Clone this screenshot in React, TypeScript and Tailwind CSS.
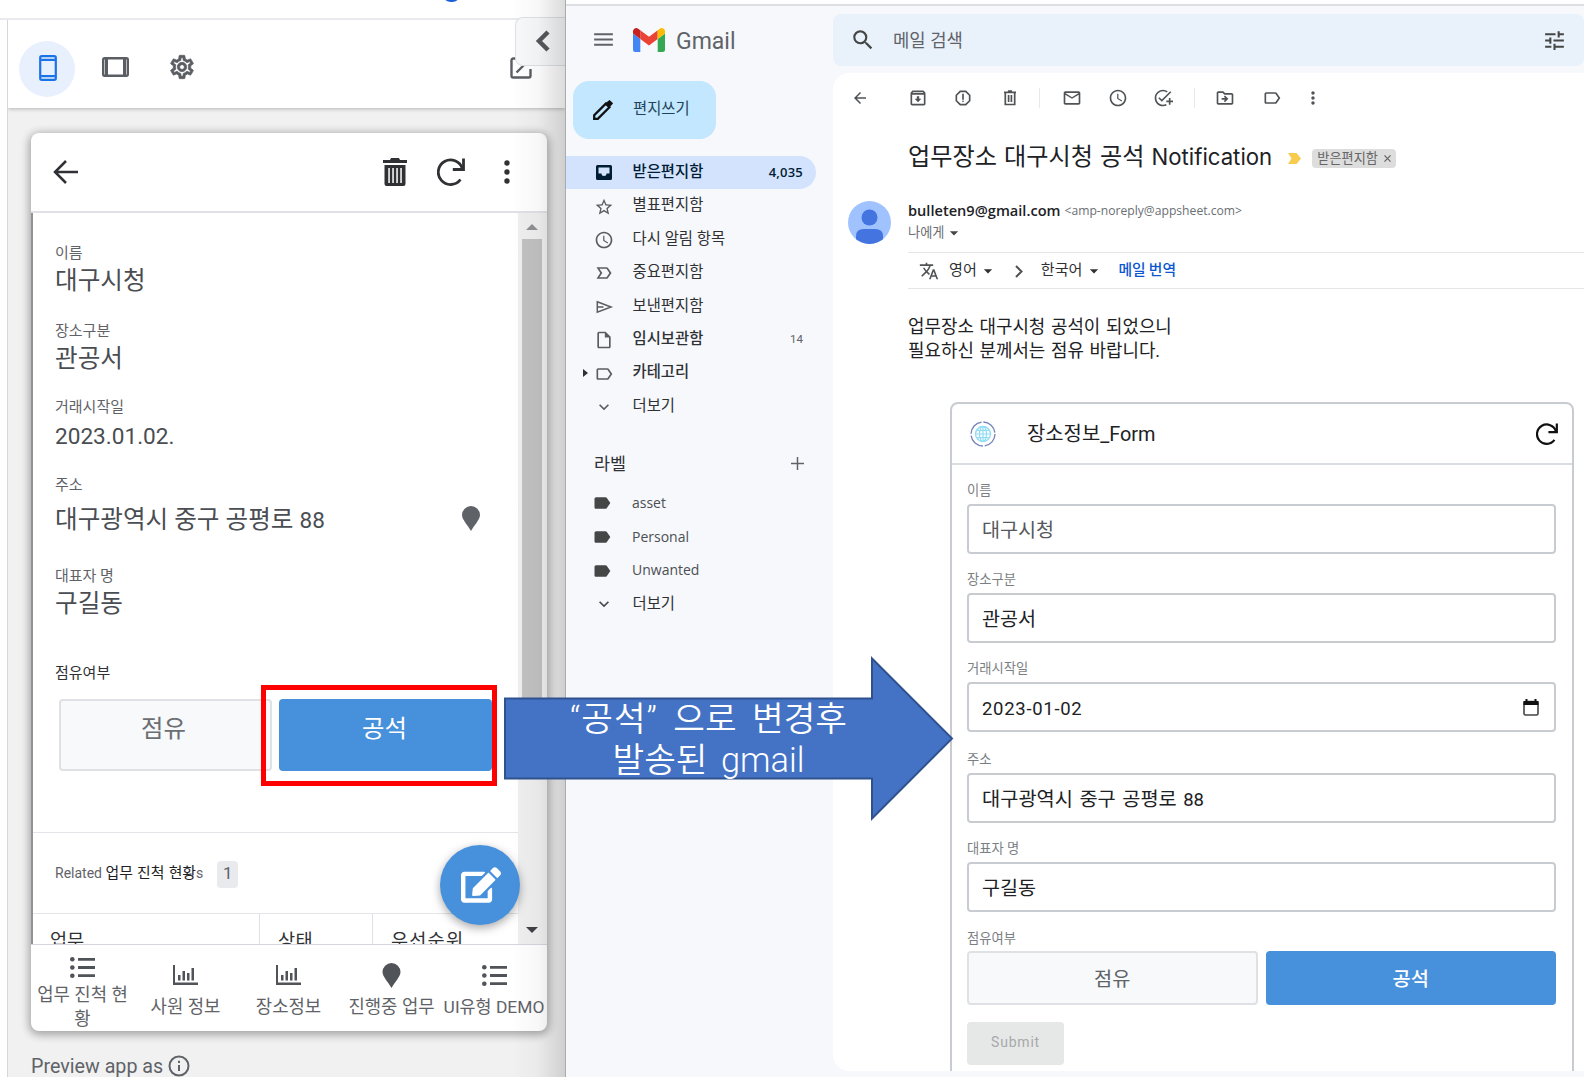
import type { ReactNode } from 'react';
import {
  MdAddTask,
  MdArrowBack,
  MdArrowDropDown,
  MdKeyboardArrowDown,
  MdLabel,
  MdLabelImportantOutline,
  MdLabelOutline,
  MdMailOutline,
  MdMenu,
  MdMoreVert,
  MdOutlineArchive,
  MdOutlineDriveFileMove,
  MdOutlineInsertDriveFile,
  MdOutlineReport,
  MdOutlineSettings,
  MdSchedule,
  MdSearch,
  MdStarOutline,
  MdTranslate,
  MdTune,
} from 'react-icons/md';
import { FaEdit } from 'react-icons/fa';

const font = "font-['Roboto','Noto_Sans_CJK_KR',sans-serif]";

/* ---------- icons ---------- */

function Refresh({ className }: { className: string }) {
  return (
    <svg viewBox="0 0 28 28" fill="none" stroke="currentColor" strokeWidth="2.8" className={className}>
      <path d="M23.5 21.5A12.3 12.3 0 1 1 25.3 10.5" />
      <path d="M26.5 0.5V11.5H15.8" />
    </svg>
  );
}

function Trash({ className }: { className: string }) {
  return (
    <svg viewBox="0 0 24 28" fill="currentColor" className={className}>
      <path d="M0 2h7l1-2h8l1 2h7v3H0z" />
      <path
        fillRule="evenodd"
        d="M1.5 7h21v19a2 2 0 0 1-2 2h-17a2 2 0 0 1-2-2zM5.3 10v15h1.5V10zM9.3 10v15h1.5V10zM13.3 10v15h1.5V10zM17.3 10v15h1.5V10z"
      />
    </svg>
  );
}

function TrashSmall({ className }: { className: string }) {
  return (
    <svg viewBox="0 0 20 20" fill="none" stroke="currentColor" strokeWidth="1.7" className={className}>
      <path d="M4 4.3h12M8 3.2h4M5.3 4.5v12h9.4v-12M8.6 7v7M11.4 7v7" />
    </svg>
  );
}

function Pin({ className }: { className: string }) {
  return (
    <svg viewBox="0 0 18 25" fill="currentColor" className={className}>
      <path d="M9 0a9 9 0 0 1 9 9c0 4.500-6 10.500-9 16C6 19.500 0 13.500 0 9a9 9 0 0 1 9-9z" />
    </svg>
  );
}

function ListIcon() {
  return (
    <svg viewBox="0 0 25 21" fill="currentColor" className="h-[21px] w-[25px]">
      <circle cx="2.300" cy="2.300" r="2.300" />
      <circle cx="2.300" cy="10.500" r="2.300" />
      <circle cx="2.300" cy="18.700" r="2.300" />
      <path d="M8 1h17v2.800H8zM8 9.100h17v2.800H8zM8 17.300h17v2.800H8z" />
    </svg>
  );
}

function ChartIcon() {
  return (
    <svg viewBox="0 0 25 20" fill="currentColor" className="h-5 w-[25px]">
      <path d="M0 0h2v17.500h23V20H0zM5 10h2.500v5.500H5zM9.500 6H12v9.500H9.500zM14 8h2.500v7.500H14zM18.500 3H21v12.500h-2.500z" />
    </svg>
  );
}

function Inbox() {
  return (
    <svg viewBox="0 0 20 20" fill="currentColor" className="h-5 w-5">
      <path fillRule="evenodd" d="M3.500 2h13A1.500 1.500 0 0 1 18 3.500v12a1.500 1.500 0 0 1-1.500 1.500h-13A1.500 1.500 0 0 1 2 15.500v-12A1.500 1.500 0 0 1 3.500 2zM4.500 4.500v6h3a2.500 2.500 0 0 0 5 0h3v-6z" />
    </svg>
  );
}

function Send() {
  return (
    <svg viewBox="0 0 20 20" fill="none" stroke="currentColor" strokeWidth="1.500" className="h-5 w-5">
      <path d="M3.300 4.800 17 10 3.300 15.200zM3.500 10h6" />
    </svg>
  );
}

function GmailLogo() {
  return (
    <svg viewBox="0 0 32 24" className="h-6 w-8">
      <path fill="#4285f4" d="M0 5.500 7.300 11v13H2.200A2.200 2.200 0 0 1 0 21.800z" />
      <path fill="#34a853" d="M32 5.500 24.700 11v13h5.100a2.200 2.200 0 0 0 2.200-2.200z" />
      <path fill="#ea4335" d="M7.300 2.200 16 8.800l8.700-6.600V11L16 17.600 7.300 11z" />
      <path fill="#c5221f" d="M0 3.300C0 .6 3.100-.9 5.200.7l2.100 1.500V11L0 5.500z" />
      <path fill="#fbbc04" d="M32 3.300c0-2.700-3.100-4.200-5.200-2.600l-2.100 1.500V11L32 5.500z" />
    </svg>
  );
}

function Globe() {
  return (
    <svg viewBox="0 0 26 26" fill="none" className="h-[26px] w-[26px]">
      <circle cx="13" cy="13" r="12" stroke="#7382b8" strokeWidth="1.300" strokeDasharray="17 1.850" />
      <circle cx="13" cy="13" r="7.500" stroke="#8fdcf3" strokeWidth="1.300" />
      <ellipse cx="13" cy="13" rx="3.500" ry="7.500" stroke="#8fdcf3" strokeWidth="1.200" />
      <path d="M13 5v16M5.500 13h15M7 9.300h12M7 16.700h12" stroke="#8fdcf3" strokeWidth="1.200" />
    </svg>
  );
}

/* ---------- app preview on the left ---------- */

function Detail({ label, className, children }: { label: string; className: string; children: ReactNode }) {
  return (
    <div className={`flex flex-col ${className}`}>
      <div className="flex h-5 items-center text-[15px] leading-none text-[#5f6368]">{label}</div>
      {children}
    </div>
  );
}

const valueCls = 'flex h-9 items-center whitespace-nowrap text-[24.600px] leading-none text-[#4a4d52]';

function NavItem({ icon, className, children }: { icon: ReactNode; className: string; children: ReactNode }) {
  return (
    <div className={`flex flex-col items-center whitespace-nowrap text-center text-[17.800px] leading-6 text-[#5f6368] ${className}`}>
      <div className="flex h-[30px] items-center text-[#505358]">{icon}</div>
      {children}
    </div>
  );
}

function PhoneCard() {
  return (
    <div className="relative ml-[23px] mt-[25px] flex h-[898px] w-[516px] shrink-0 flex-col overflow-hidden rounded-lg bg-white shadow-[0_2px_8px_2px_rgba(0,0,0,0.32)]">
      <div className="flex h-20 shrink-0 items-center border-b-2 border-[#dfe1e5] pl-[22px] text-[#303134]">
        <svg viewBox="0 0 25 24" fill="none" stroke="currentColor" strokeWidth="2.500" className="h-6 w-[25px]">
          <path d="M13 1 2 12l11 11M2 12h23" />
        </svg>
        <Trash className="ml-[305px] h-7 w-6" />
        <Refresh className="ml-[30px] h-[28px] w-[28px]" />
        <svg viewBox="0 0 6 24" fill="currentColor" className="ml-[39px] h-6 w-1.5">
          <circle cx="3" cy="3" r="2.700" />
          <circle cx="3" cy="12" r="2.700" />
          <circle cx="3" cy="21" r="2.700" />
        </svg>
      </div>

      <div className="flex h-[732px] shrink-0 border-b border-[#d5d7dc]">
        <div className="flex flex-1 flex-col overflow-hidden border-l-2 border-[#8f9296]">
          <div className="flex h-[619px] shrink-0 flex-col pl-[22px] pt-[30px]">
            <Detail label="이름" className="h-[78px]">
              <div className={valueCls}>대구시청</div>
            </Detail>
            <Detail label="장소구분" className="h-[76px]">
              <div className={valueCls}>관공서</div>
            </Detail>
            <Detail label="거래시작일" className="h-[78px]">
              <div className="flex h-[39px] items-center text-[22.600px] text-[#4a4d52]">2023.01.02.</div>
            </Detail>
            <Detail label="주소" className="h-[91px]">
              <div className="flex h-[50px] items-center justify-between whitespace-nowrap pr-[38px] text-[24.600px] leading-none text-[#4a4d52]">
                <span>
                  대구광역시 중구 공평로 <span className="text-[22.500px]">88</span>
                </span>
                <Pin className="mb-1 h-[25px] w-[18px] text-[#5f6368]" />
              </div>
            </Detail>
            <Detail label="대표자 명" className="h-[97px]">
              <div className={valueCls}>구길동</div>
            </Detail>
            <div className="flex h-5 items-center text-[15px] leading-none text-[#303134]">점유여부</div>
            <div className="ml-1 mt-4 flex gap-[7px] text-[24.400px] leading-none">
              <div className="flex h-[72px] w-[213px] shrink-0 justify-center rounded-sm border-2 border-[#dfe1e5] bg-[#f8f9fb] pr-1 pt-4 text-[#6b6e72]">
                점유
              </div>
              <div className="flex h-[72px] w-[213px] shrink-0 justify-center rounded-sm bg-[#4790dc] pr-0.5 pt-[18px] text-white">공석</div>
            </div>
          </div>
          <div className="flex h-[82px] shrink-0 items-center border-y border-[#e3e5e8] pl-[22px] text-[14px] text-[#5f6368]">
            <span className="whitespace-nowrap">
              Related <span className="text-[14.900px] text-[#202124] [word-spacing:0.500px]">업무 진척 현황</span>s
            </span>
            <span className="ml-[14px] mt-0.5 flex h-[27px] w-[21px] items-center justify-center rounded bg-[#e8eaed] text-[17px]">1</span>
          </div>
          <div className="flex h-[30px] shrink-0 whitespace-nowrap text-[18.600px] leading-[27px] text-[#303134] [&>div]:pt-[14px]">
            <div className="w-[227px] border-r border-[#dfe1e5] pl-[17px]">업무</div>
            <div className="w-[113px] border-r border-[#dfe1e5] pl-[18px] tracking-[0.500px]">상태</div>
            <div className="pl-[18px] tracking-[1.200px]">우선순위</div>
          </div>
        </div>
        <div className="flex w-[29px] flex-col items-center bg-[#efefef] pr-0.5">
          <svg viewBox="0 0 12 6" className="mt-[11px] h-1.5 w-3 fill-[#8f9194]">
            <path d="M0 6 6 0l6 6z" />
          </svg>
          <div className="mt-[9px] h-[500px] w-5 bg-[#c1c1c1]" />
          <svg viewBox="0 0 12 6" className="mb-[11px] mt-auto h-1.5 w-3 fill-[#404245]">
            <path d="M0 0h12L6 6z" />
          </svg>
        </div>
      </div>

      <div className="flex flex-1 items-start">
        <NavItem icon={<ListIcon />} className="w-[103px] pt-[7px]">
          <div className="mt-px">
            업무 진척 현
            <br />황
          </div>
        </NavItem>
        <NavItem icon={<ChartIcon />} className="w-[103px] pt-[15px]">
          <div className="mt-[5px]">사원 정보</div>
        </NavItem>
        <NavItem icon={<ChartIcon />} className="w-[103px] pt-[15px]">
          <div className="mt-[5px]">장소정보</div>
        </NavItem>
        <NavItem icon={<Pin className="h-[25px] w-[19px]" />} className="w-[103px] pt-[15px]">
          <div className="mt-[5px]">진행중 업무</div>
        </NavItem>
        <NavItem icon={<ListIcon />} className="w-[102px] pt-[15px]">
          <div className="mt-[5px] text-[17.400px]">UI유형 DEMO</div>
        </NavItem>
      </div>

      <div className="absolute left-[409px] top-3 mt-[700px] flex h-20 w-20 items-center justify-center rounded-full bg-[#4790dc] text-white shadow-[0_3px_10px_rgba(0,0,0,0.35)]">
        <FaEdit className="ml-0.5 h-10 w-10" />
      </div>
    </div>
  );
}

function PreviewPane() {
  return (
    <div className="relative flex w-[565px] shrink-0 flex-col overflow-hidden bg-white">
      <div className="h-5 shrink-0 border-b-2 border-[#e8eaed]" />
      <div className="ml-[7px] flex flex-1 flex-col overflow-hidden border-l border-[#d5d7da] bg-[#f1f1f1]">
        <div className="z-10 flex h-[88px] shrink-0 items-center bg-white pt-2.5 text-[#5a5d62] shadow-[0_1px_4px_rgba(0,0,0,0.25)]">
          <div className="ml-[11px] flex h-14 w-14 items-center justify-center rounded-full bg-[#e8f0fe] pb-[3px] pl-0.5 text-[#1a73e8]">
            <svg viewBox="0 0 18 26" fill="none" stroke="currentColor" strokeWidth="2.200" className="h-[26px] w-[18px]">
              <rect x="1.200" y="1.200" width="15.600" height="23.600" rx="1.500" />
              <path d="M1 4.800h16M1 21.200h16" />
            </svg>
          </div>
          <svg viewBox="0 0 27 20" fill="none" stroke="currentColor" strokeWidth="2.400" className="mb-1 ml-[27px] h-5 w-[27px]">
            <rect x="1.200" y="1.200" width="24.600" height="17.600" rx="1.500" />
            <path d="M4.500 1v18M22.500 1v18" strokeWidth="3" />
          </svg>
          <MdOutlineSettings className="mb-1 ml-[39px] h-7 w-7 [&>path:last-child]:stroke-current [&>path:last-child]:stroke-[0.600]" />
          <svg viewBox="0 0 22 22" fill="none" stroke="currentColor" strokeWidth="2.400" className="mb-[3px] ml-[314px] h-[22px] w-[22px]">
            <path d="M7 1.500H3.200A1.700 1.700 0 0 0 1.500 3.200v15.600a1.700 1.700 0 0 0 1.700 1.700h15.600a1.700 1.700 0 0 0 1.700-1.700V12M6.500 15.500l9-9" />
          </svg>
        </div>
        <PhoneCard />
        <div className="ml-[23px] mt-6 flex items-center gap-[5px] whitespace-nowrap text-[19.700px] leading-6 text-[#5f6368]">
          Preview app as
          <svg viewBox="0 0 22 22" fill="none" stroke="currentColor" strokeWidth="2" className="mb-0.5 h-[22px] w-[22px]">
            <circle cx="11" cy="11" r="9.500" />
            <path d="M11 10v6M11 5.800v2.200" />
          </svg>
        </div>
      </div>

      {/* tail of the sync indicator, cut off by the window's top */}
      <div className="absolute -top-4 left-[442px] h-[18px] w-[19px] rounded-full bg-[#1a5fd8]" />
      <div className="absolute right-0 top-[17px] z-20 flex h-[49px] w-[50px] items-center rounded-l-lg border border-r-0 border-[#dfe1e5] bg-[#f8f9fa] pb-0.5 pl-[19px]">
        <svg viewBox="0 0 15 22" fill="none" stroke="#55585c" strokeWidth="4.500" className="h-[22px] w-[15px]">
          <path d="M13 2 4 11l9 9" />
        </svg>
      </div>
      <div className="absolute inset-y-0 right-0 z-30 w-[54px] bg-linear-to-r from-black/0 via-black/3 to-black/14" />
    </div>
  );
}

/* ---------- mail client on the right ---------- */

function Important({ className }: { className: string }) {
  return (
    <svg viewBox="0 0 13 11" className={className}>
      <path fill="#f7cb4d" d="M0 0h8.500L13 5.500 8.500 11H0l3.500-5.500z" />
    </svg>
  );
}

const folders = [
  { label: '받은편지함', icon: <Inbox />, count: '4,035', active: true },
  { label: '별표편지함', icon: <MdStarOutline /> },
  { label: '다시 알림 항목', icon: <MdSchedule /> },
  { label: '중요편지함', icon: <MdLabelImportantOutline /> },
  { label: '보낸편지함', icon: <Send /> },
  { label: '임시보관함', icon: <MdOutlineInsertDriveFile />, count: '14', bold: true },
  { label: '카테고리', icon: <MdLabelOutline />, bold: true, expand: true },
  { label: '더보기', icon: <MdKeyboardArrowDown /> },
];

const labels = [
  { label: 'asset', icon: <MdLabel /> },
  { label: 'Personal', icon: <MdLabel /> },
  { label: 'Unwanted', icon: <MdLabel /> },
];

function Sidebar() {
  return (
    <div className="flex w-[267px] shrink-0 flex-col text-[#303134]">
      <div className="mt-[14px] flex h-10 items-center pl-[25px]">
        <MdMenu className="mb-0.5 h-[25px] w-[25px] text-[#5f6368]" />
        <div className="ml-[17px]">
          <GmailLogo />
        </div>
        <span className="ml-[11px] mt-1 text-[23px] text-[#5f6368]">Gmail</span>
      </div>
      <div className="ml-[7px] mt-[21px] flex h-[58px] w-[143px] items-center rounded-2xl bg-[#c2e7ff] pl-5">
        <svg viewBox="0 0 20 20" fill="none" stroke="#111" strokeWidth="2.300" className="h-5 w-5">
          <path d="M1.200 18.800v-3.600L12.800 3.600l3.600 3.600L4.800 18.800z" />
          <path d="M14 3.500 16.500 1.500l2 2-2.300 2.500z" fill="#111" />
        </svg>
        <span className="ml-5 text-[15.400px] leading-none text-[#1f4358]">편지쓰기</span>
      </div>

      <div className="mt-[17px] flex flex-col">
        {folders.map((f) => (
          <div
            key={f.label}
            className={`relative flex h-[33.400px] w-[250px] items-center rounded-r-full pl-7 ${f.active ? 'bg-[#d3e3fd] text-[#001d35]' : ''}`}
          >
            {f.expand && <span className="absolute left-[17px] h-0 w-0 border-y-4 border-l-[5px] border-y-transparent border-l-[#303134]" />}
            <span className={`mt-px text-[20px] ${f.active ? 'text-[#001d35]' : 'text-[#5a5d60]'}`}>{f.icon}</span>
            <span className={`ml-[18.500px] whitespace-nowrap text-[15.400px] leading-none ${f.active || f.bold ? 'font-medium' : ''}`}>
              {f.label}
            </span>
            <span
              className={`ml-auto mr-[13px] ${f.active ? "font-['Open_Sans'] text-[13px] font-semibold tracking-[0.200px]" : 'text-[11.500px] text-[#5f6368]'}`}
            >
              {f.count}
            </span>
          </div>
        ))}
      </div>

      <div className="mt-6 flex h-[34px] items-center justify-between pl-7 pr-[29px]">
        <span className="mt-0.5 text-[17.400px] leading-none">라벨</span>
        <svg viewBox="0 0 13 13" stroke="#5f6368" strokeWidth="1.500" className="mb-0.5 h-[13px] w-[13px]">
          <path d="M6.500 0v13M0 6.500h13" />
        </svg>
      </div>
      <div className="mt-[5px] flex flex-col">
        {labels.map((l) => (
          <div key={l.label} className="flex h-[33.700px] items-center pl-[26px]">
            <span className="mt-px text-[20px] text-[#444746]">{l.icon}</span>
            <span className="ml-[20px] font-['Open_Sans'] text-[14px] leading-none text-[#4c4f53]">{l.label}</span>
          </div>
        ))}
        <div className="flex h-[33.700px] items-center pl-7">
          <MdKeyboardArrowDown className="h-5 w-5 text-[#444746]" />
          <span className="ml-[18.500px] mt-0.5 text-[15.400px] leading-none">더보기</span>
        </div>
      </div>
    </div>
  );
}

function MailToolbar() {
  return (
    <div className="flex h-[49px] shrink-0 items-center text-[20px] text-[#505356]">
      <MdArrowBack className="ml-[18px] h-[18px] w-[18px]" />
      <MdOutlineArchive className="ml-[39px]" />
      <MdOutlineReport className="ml-[25px]" />
      <TrashSmall className="ml-[27px] h-5 w-5" />
      <span className="ml-[19px] h-5 w-px bg-[#e6e8ea]" />
      <MdMailOutline className="ml-[22px]" />
      <MdSchedule className="ml-[26px]" />
      <MdAddTask className="ml-[25px]" />
      <span className="ml-[21px] h-5 w-px bg-[#e6e8ea]" />
      <MdOutlineDriveFileMove className="ml-[20px]" />
      <MdLabelOutline className="ml-[27px]" />
      <MdMoreVert className="ml-[21px]" />
    </div>
  );
}

function Input({ label, className, children }: { label: string; className: string; children: ReactNode }) {
  return (
    <div className={`flex flex-col ${className}`}>
      <span className="flex h-[25px] items-start pt-0.5 text-[13.300px] leading-5 text-[#7b7f84]">{label}</span>
      <div className="flex h-[50px] shrink-0 items-center justify-between whitespace-nowrap rounded border-2 border-[#c8ccd1] px-[13px] pt-[3px] text-[19.600px] leading-none text-[#202124]">
        {children}
      </div>
    </div>
  );
}

function PlaceForm() {
  return (
    <div className="ml-[117px] mt-[39px] flex h-[700px] w-[624px] shrink-0 flex-col rounded-lg border-2 border-[#c8ccd1]">
      <div className="flex h-[61px] shrink-0 items-center border-b-2 border-[#d9dce1] pl-[18px] pr-[14px]">
        <Globe />
        <span className="ml-[31px] mt-[3px] text-[19.900px] leading-none text-[#202124]">장소정보_Form</span>
        <Refresh className="ml-auto h-[22px] w-[22px] text-[#111]" />
      </div>
      <div className="flex flex-col pl-[15px] pr-4 pt-[14px]">
        <Input label="이름" className="h-[89px]">
          <span className="text-[#55585c]">대구시청</span>
        </Input>
        <Input label="장소구분" className="h-[89px]">
          관공서
        </Input>
        <Input label="거래시작일" className="h-[91px]">
          <span className="mt-px text-[18.500px] tracking-[0.700px]">2023-01-02</span>
          <svg viewBox="0 0 16 17" className="mb-[3px] mr-0.5 h-[17px] w-4">
            <rect x="1" y="2.500" width="14" height="13.500" rx="1.500" fill="none" stroke="#444" strokeWidth="1.600" />
            <path d="M0.500 2h15v4h-15zM2.500 0h2v3h-2zM11.500 0h2v3h-2z" fill="#111" />
          </svg>
        </Input>
        <Input label="주소" className="h-[89px]">
          <span className="[word-spacing:1.500px]">
            <span className="text-[19.800px]">대구광역시 중구 공평로</span> <span className="text-[18.500px]">88</span>
          </span>
        </Input>
        <Input label="대표자 명" className="h-[89px]">
          구길동
        </Input>
        <span className="h-[25px] pt-[3px] text-[13.300px] leading-5 text-[#7b7f84]">점유여부</span>
        <div className="grid h-[54px] grid-cols-2 gap-2 text-[19.800px] font-medium leading-none">
          <div className="flex items-center justify-center rounded border-2 border-[#dfe1e5] bg-[#f8f9fb] pt-[3px] font-normal text-[#5f6368]">점유</div>
          <div className="flex items-center justify-center rounded bg-[#4790dc] pt-[3px] text-white">공석</div>
        </div>
        <div className="mt-[17px] flex h-[43px] w-[97px] items-center justify-center rounded bg-[#e6e8e7] pb-[3px] text-[14px] tracking-[0.800px] text-[#a6a9ab]">
          Submit
        </div>
      </div>
    </div>
  );
}

function MailPane() {
  return (
    <div className="flex min-w-0 flex-1 flex-col">
      <div className="mt-2 flex h-[52px] shrink-0 items-center rounded-lg bg-[#e9f1fb] pl-[17px] pr-[17px] text-[#444746]">
        <MdSearch className="h-[26px] w-[26px]" />
        <span className="ml-[17px] mt-0.5 text-[17.800px] leading-none text-[#5f6368]">메일 검색</span>
        <MdTune className="ml-auto h-[25px] w-[25px]" />
      </div>
      <div className="mt-[7px] flex h-[998px] shrink-0 flex-col overflow-hidden rounded-l-2xl bg-white">
        <MailToolbar />
        <div className="ml-[75px] mt-[13px] flex h-11 shrink-0 items-center">
          <span className="whitespace-nowrap text-[24.200px] leading-none text-[#202124] [word-spacing:1px]">
            업무장소 대구시청 공석 <span className="font-['Inter'] text-[22.200px]">Notification</span>
          </span>
          <Important className="ml-4 mt-[3px] h-[11px] w-[13px]" />
          <span className="ml-[11px] mt-0.5 flex h-[19px] w-[84px] items-center justify-center gap-1.5 whitespace-nowrap rounded bg-[#dddddd] text-[13.200px] leading-none text-[#666]">
            <span className="pt-px">받은편지함</span>
            <svg viewBox="0 0 8 8" stroke="#666" strokeWidth="1.400" className="h-[7px] w-[7px]">
              <path d="m.5.5 7 7M7.500.5l-7 7" />
            </svg>
          </span>
        </div>
        <div className="ml-[15px] mt-[22px] flex h-[43px] shrink-0">
          <svg viewBox="0 0 43 43" className="h-[43px] w-[43px]">
            <clipPath id="avatar">
              <circle cx="21.500" cy="21.500" r="21.500" />
            </clipPath>
            <g clipPath="url(#avatar)">
              <rect width="43" height="43" fill="#a0c3ff" />
              <circle cx="21.500" cy="16.500" r="8" fill="#4374e0" />
              <path fill="#4374e0" d="M8 43v-8q0-7 8-7h11q8 0 8 7v8z" />
            </g>
          </svg>
          <div className="ml-[17px] flex flex-col whitespace-nowrap">
            <div className="flex h-[21px] items-center gap-1 font-['Open_Sans']">
              <span className="-mt-0.5 text-[14.600px] font-semibold leading-none text-[#202124]">bulleten9@gmail.com</span>
              <span className="text-[12.150px] leading-none text-[#6b6f74]">&lt;amp-noreply@appsheet.com&gt;</span>
            </div>
            <div className="flex h-[22px] items-center text-[13.200px] leading-none text-[#6b6f74]">
              <span>나에게</span>
              <MdArrowDropDown className="h-5 w-5 text-[#444746]" />
            </div>
          </div>
        </div>
        <div className="ml-[75px] mt-2 flex h-[37px] shrink-0 items-center whitespace-nowrap border-y border-[#e4e6e8] pl-[11px] text-[15.100px] leading-none text-[#303134]">
          <MdTranslate className="h-5 w-5 text-[#505356]" />
          <span className="ml-[10px]">영어</span>
          <MdArrowDropDown className="ml-px h-5 w-5" />
          <svg viewBox="0 0 8 13" fill="none" stroke="#505356" strokeWidth="2" className="ml-[17px] mt-0.5 h-[13px] w-2">
            <path d="m1 1 5.500 5.500L1 12" />
          </svg>
          <span className="ml-[18px]">한국어</span>
          <MdArrowDropDown className="ml-0.5 h-5 w-5" />
          <span className="ml-[14px] text-[14.800px] font-medium text-[#0b57d0] [word-spacing:-0.500px]">메일 번역</span>
        </div>
        <div className="ml-[75px] mt-[25px] shrink-0 whitespace-nowrap pt-px text-[17.900px] leading-6 text-[#202124] [word-spacing:1.200px]">
          업무장소 대구시청 공석이 되었으니
          <br />
          필요하신 분께서는 점유 바랍니다.
        </div>
        <PlaceForm />
      </div>
    </div>
  );
}

export default function App() {
  return (
    <div className={`relative flex h-[1077px] w-[1584px] overflow-hidden bg-white ${font}`}>
      <PreviewPane />
      <div className="flex min-w-0 flex-1 flex-col border-l border-[#a9abae] bg-[#f6f8fc]">
        <div className="h-1.5 shrink-0 border-b-2 border-[#dcdee1] bg-white" />
        <div className="flex min-h-0 flex-1">
          <Sidebar />
          <MailPane />
        </div>
      </div>

      {/* annotations drawn over both windows */}
      <div className="absolute left-[261px] top-[685px] z-40 h-[101px] w-[236px] border-[5px] border-[#ff0000]" />
      <div className="absolute left-[504px] top-[656px] z-40 h-[165px] w-[450px]">
        <svg viewBox="0 0 450 165" className="absolute inset-0 h-full w-full">
          <path d="M1 42.500h367V2.500l80 80-80 80v-40H1z" fill="#4472c4" stroke="#2f528f" strokeWidth="2" />
        </svg>
        <div className="relative w-[409px] whitespace-nowrap pt-[43px] text-center text-[34.400px] font-[350] leading-[41px] text-white">
          <div className="[word-spacing:7px]">
            <span className="tracking-[1px]">“공석”</span> 으로 변경후
          </div>
          <div className="[word-spacing:5px]">
            발송된 <span className="font-light">gmail</span>
          </div>
        </div>
      </div>
    </div>
  );
}
